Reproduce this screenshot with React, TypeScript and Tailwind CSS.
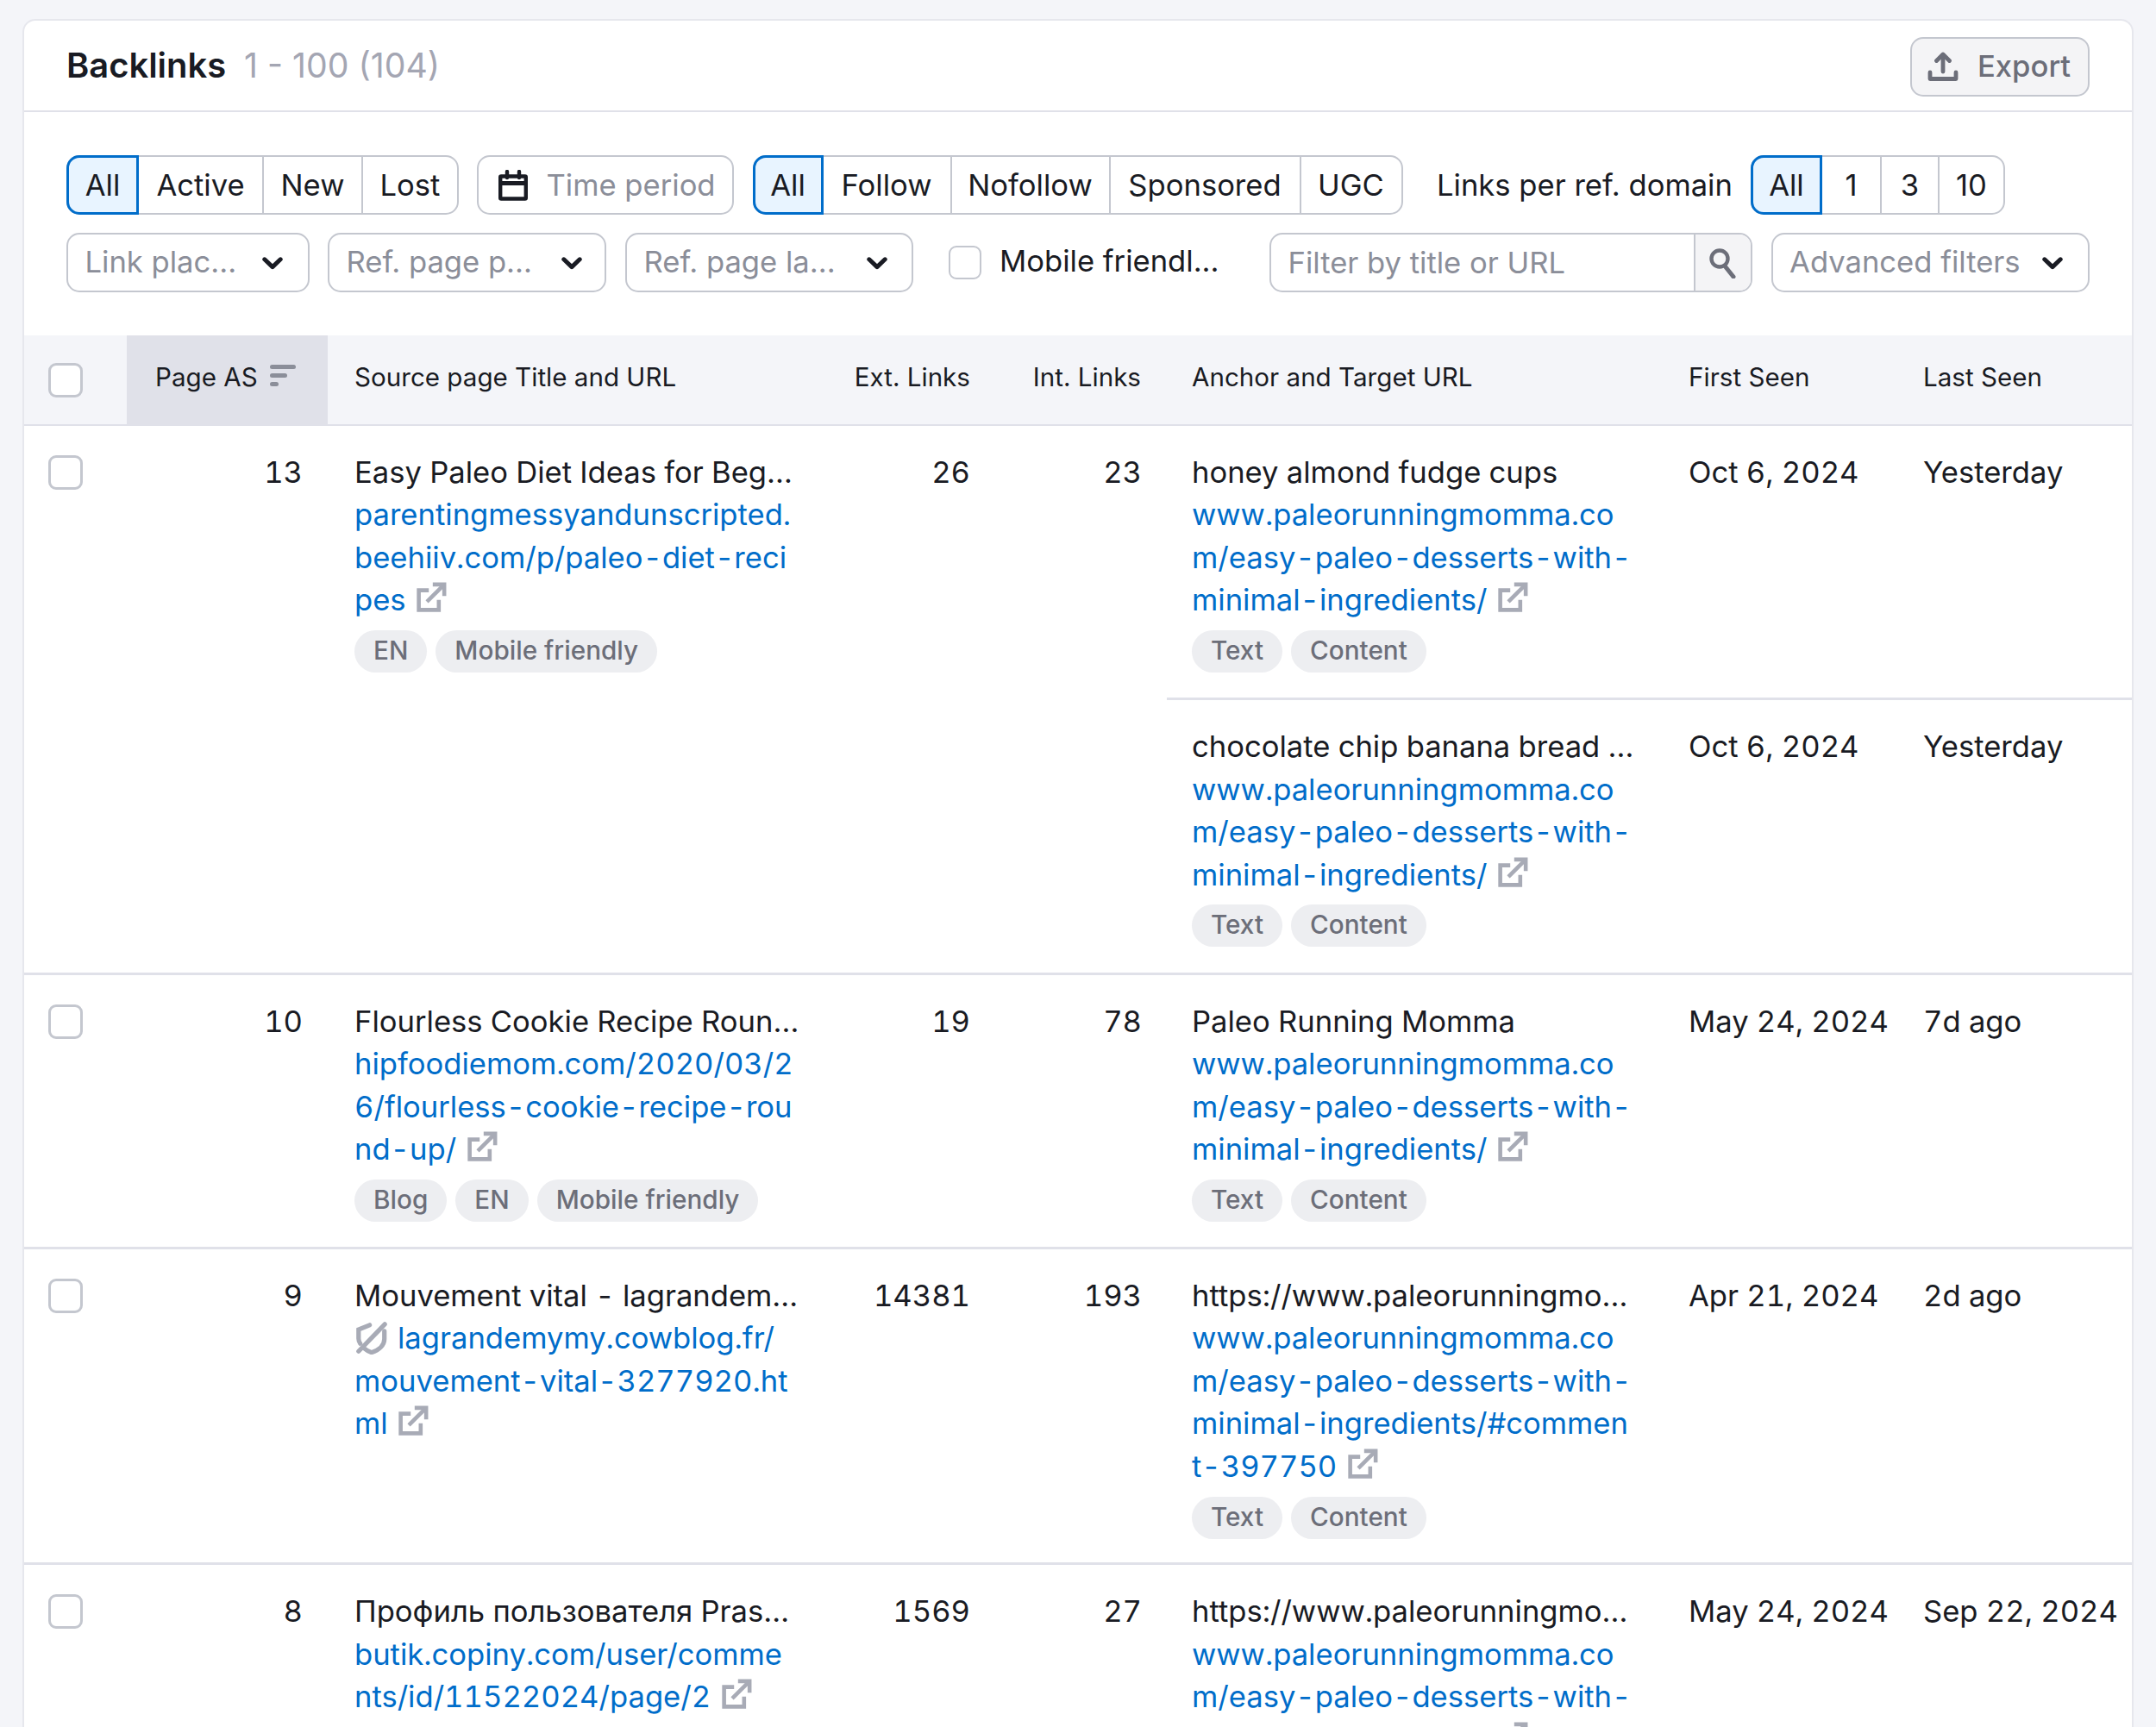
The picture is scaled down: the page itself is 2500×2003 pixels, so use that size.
import React from "react";

const BORDER = "border-[#c4c7cf]";

function ExtIcon() {
  return (
    <svg viewBox="0 0 16 16" className="inline-block w-[35px] h-[35px] ml-[12.5px] align-[-2px]" fill="none" stroke="#a8abb6" strokeWidth="2.1">
      <path d="M6.5 4.4H1.2v10.4h10.6V9.5" />
      <path d="M5.5 10.5 14 2" />
      <path d="M8.6 1.3h6.1v6.1" />
    </svg>
  );
}

function NoFollowIcon() {
  return (
    <svg viewBox="0 0 16 16" className="inline-block w-[38px] h-[38px] ml-[1px] mr-[11px] align-[-7px]" fill="none" stroke="#a8abb6" strokeWidth="2.2" strokeLinecap="round">
      <path d="M7 1.6 1.6 3.8v4.4c0 .9.3 1.7.8 2.4" />
      <path d="M14.2 4.6v3.8c0 3-2.6 5.4-6.3 6.6-1.4-.5-2.5-1.1-3.4-1.9" />
      <path d="M1.6 14.4 14.4 1.2" />
    </svg>
  );
}

function Chevron() {
  return (
    <svg viewBox="0 0 24 15" className="w-[24px] h-[15px] shrink-0 mt-[2px]" fill="none" stroke="#191b23" strokeWidth="5" strokeLinecap="round" strokeLinejoin="round">
      <path d="M2.8 2.8 12 11.6l9.2-8.8" />
    </svg>
  );
}

function CalendarIcon() {
  return (
    <svg viewBox="0 0 34 36" className="w-[34px] h-[36px] shrink-0" fill="none" stroke="#191b23" strokeWidth="4.4" strokeLinecap="round">
      <rect x="2.2" y="7.5" width="29.6" height="26" rx="1" />
      <path d="M2 15.5h30" strokeWidth="5" strokeLinecap="butt" />
      <path d="M10 2v7M24 2v7" />
    </svg>
  );
}

function ExportIcon() {
  return (
    <svg viewBox="0 0 36 34" className="w-[36px] h-[34px] shrink-0" fill="none" stroke="#6c6e79" strokeWidth="4.8" strokeLinecap="round" strokeLinejoin="round">
      <path d="M18 4v19" />
      <path d="M10.5 10.5 18 3l7.5 7.5" />
      <path d="M3 24v7.5h30V24" />
    </svg>
  );
}

function SearchIcon() {
  return (
    <svg viewBox="0 0 34 36" className="w-[34px] h-[36px]" fill="none" stroke="#6c6e79" strokeWidth="4.4" strokeLinecap="round">
      <circle cx="13" cy="13" r="9.5" />
      <path d="M19 21.5 29 34" strokeWidth="5" />
    </svg>
  );
}

function SortIcon() {
  return (
    <svg viewBox="0 0 30 26" className="w-[30px] h-[26px] shrink-0 mt-[10px]" fill="#8b8e99">
      <rect x="0" y="0" width="30" height="5" rx="2.5" />
      <rect x="0" y="10" width="20" height="5" rx="2.5" />
      <rect x="0" y="20" width="10" height="5" rx="2.5" />
    </svg>
  );
}

function Checkbox({ className = "" }: { className?: string }) {
  return <div className={"w-[40px] h-[40px] rounded-[9px] border-[3px] border-[#c4c7cf] bg-white shrink-0 " + className} />;
}

function Url({ lines, nofollow }: { lines: string[]; nofollow?: boolean }) {
  return (
    <div className="text-[#006dca]">
      {lines.map((l, i) => (
        <div key={i} className="whitespace-nowrap h-[49.6px]">
          {i === 0 && nofollow && <NoFollowIcon />}
          {l}
          {i === lines.length - 1 && <ExtIcon />}
        </div>
      ))}
    </div>
  );
}

function Pills({ items }: { items: string[] }) {
  return (
    <div className="flex gap-[10px] mt-[10px]">
      {items.map((t) => (
        <span key={t} className="h-[49px] px-[22px] rounded-full bg-[#edeef1] text-[#6c6e79] text-[29.7px] font-medium leading-[47px] whitespace-nowrap">
          {t}
        </span>
      ))}
    </div>
  );
}

type Seg = { label: string; w: string; active?: boolean };

function Segments({ items }: { items: Seg[] }) {
  return (
    <div className={"flex h-[69px] rounded-[15px] border-2 bg-white " + BORDER}>
      {items.map((s, i) => (
        <div
          key={s.label}
          className={
            s.w +
            " " +
            (s.active
              ? "-my-[2px] -ml-[2px] h-[69px] rounded-l-[15px] border-[3px] border-[#006dca] bg-[#e8f4ff] flex items-center justify-center text-[#191b23]"
              : "flex items-center justify-center text-[#191b23] " + (i > 1 ? "border-l-2 " + BORDER : ""))
          }
        >
          {s.label}
        </div>
      ))}
    </div>
  );
}

function Select({ label, className = "" }: { label: string; className?: string }) {
  return (
    <div className={"h-[69px] flex items-center justify-between pl-[19.5px] rounded-[15px] border-2 text-[#8b8e99] whitespace-nowrap " + BORDER + " " + className}>
      <span className="-mt-[2px]">{label}</span>
      <Chevron />
    </div>
  );
}

const TARGET = ["www.paleorunningmomma.co", "m/easy-paleo-desserts-with-", "minimal-ingredients/"];
const TARGET2 = ["www.paleorunningmomma.co", "m/easy-paleo-desserts-with-", "minimal-ingredients/#commen", "t-397750"];

type Anchor = { text: string; url: string[]; first: string; last: string };
type Row = {
  as: string;
  title: string;
  url: string[];
  nofollow?: boolean;
  tags?: string[];
  ext: string;
  int: string;
  pb: string;
  anchors: Anchor[];
};

const ROWS: Row[] = [
  {
    as: "13",
    title: "Easy Paleo Diet Ideas for Beg…",
    url: ["parentingmessyandunscripted.", "beehiiv.com/p/paleo-diet-reci", "pes"],
    tags: ["EN", "Mobile friendly"],
    ext: "26",
    int: "23",
    pb: "pb-[29.2px]",
    anchors: [
      { text: "honey almond fudge cups", url: TARGET, first: "Oct 6, 2024", last: "Yesterday" },
      { text: "chocolate chip banana bread …", url: TARGET, first: "Oct 6, 2024", last: "Yesterday" },
    ],
  },
  {
    as: "10",
    title: "Flourless Cookie Recipe Roun…",
    url: ["hipfoodiemom.com/2020/03/2", "6/flourless-cookie-recipe-rou", "nd-up/"],
    tags: ["Blog", "EN", "Mobile friendly"],
    ext: "19",
    int: "78",
    pb: "pb-[28.6px]",
    anchors: [{ text: "Paleo Running Momma", url: TARGET, first: "May 24, 2024", last: "7d ago" }],
  },
  {
    as: "9",
    title: "Mouvement vital - lagrandem…",
    url: ["lagrandemymy.cowblog.fr/", "mouvement-vital-3277920.ht", "ml"],
    nofollow: true,
    ext: "14381",
    int: "193",
    pb: "pb-[27.6px]",
    anchors: [{ text: "https://www.paleorunningmo…", url: TARGET2, first: "Apr 21, 2024", last: "2d ago" }],
  },
  {
    as: "8",
    title: "Профиль пользователя Pras…",
    url: ["butik.copiny.com/user/comme", "nts/id/11522024/page/2"],
    ext: "1569",
    int: "27",
    pb: "pb-[28.6px]",
    anchors: [{ text: "https://www.paleorunningmo…", url: TARGET, first: "May 24, 2024", last: "Sep 22, 2024" }],
  },
];

export default function App() {
  return (
    <div className="h-[2003px] overflow-hidden bg-[#f4f5f9] pt-[22px] px-[26px] text-[34.6px] leading-[49.6px] text-[#191b23] [font-family:Inter,sans-serif]">
      <div className="w-[2448px] bg-white rounded-t-[15px] border-x-2 border-t-2 border-[#e6e7ed]">
        {/* Title bar */}
        <div className="h-[106px] flex items-center justify-between pl-[49px] pr-[49px] border-b-2 border-[#e0e1e9]">
          <div className="flex items-baseline gap-[21px]">
            <span className="font-semibold text-[39.9px]">Backlinks</span>
            <span className="text-[#a4a6b3] text-[39.2px]">1 - 100 (104)</span>
          </div>
          <div className="w-[208px] h-[69px] mt-[2px] rounded-[15px] border-2 border-[#c4c7cf] bg-[#f4f4f6] flex items-center pl-[18px] gap-[22px] text-[#6c6e79] font-medium">
            <ExportIcon />
            <span>Export</span>
          </div>
        </div>

        {/* Filters */}
        <div className="pt-[50px] pb-[49.5px] pl-[49px] flex flex-col gap-[21px]">
          <div className="flex items-center">
            <Segments
              items={[
                { label: "All", w: "w-[84px]", active: true },
                { label: "Active", w: "w-[143px]" },
                { label: "New", w: "w-[115px]" },
                { label: "Lost", w: "w-[111px]" },
              ]}
            />
            <div className={"ml-[20.5px] w-[298px] h-[69px] rounded-[15px] border-2 flex items-center pl-[23px] gap-[22px] text-[#8b8e99] " + BORDER}>
              <CalendarIcon />
              <span>Time period</span>
            </div>
            <div className="ml-[22px]">
              <Segments
                items={[
                  { label: "All", w: "w-[82px]", active: true },
                  { label: "Follow", w: "w-[147px]" },
                  { label: "Nofollow", w: "w-[184px]" },
                  { label: "Sponsored", w: "w-[221px]" },
                  { label: "UGC", w: "w-[118px]" },
                ]}
              />
            </div>
            <span className="ml-[39.5px] whitespace-nowrap">Links per ref. domain</span>
            <div className="ml-[21px]">
              <Segments
                items={[
                  { label: "All", w: "w-[83px]", active: true },
                  { label: "1", w: "w-[67px]" },
                  { label: "3", w: "w-[67px]" },
                  { label: "10", w: "w-[76px]" },
                ]}
              />
            </div>
          </div>
          <div className="flex items-center">
            <Select label="Link plac..." className="w-[282px] pr-[29px]" />
            <Select label="Ref. page p..." className="ml-[21px] w-[323px] pr-[26px]" />
            <Select label="Ref. page la..." className="ml-[22px] w-[334px] pr-[28px]" />
            <Checkbox className="ml-[41px] !w-[38px] !h-[39px] rounded-[8px] !border-2" />
            <span className="ml-[21px] -mt-[3px] whitespace-nowrap">Mobile friendl...</span>
            <div className={"ml-[58px] w-[560px] h-[69px] rounded-[15px] border-2 flex overflow-hidden " + BORDER}>
              <div className="flex-1 flex items-center pl-[20px] text-[#8b8e99]">Filter by title or URL</div>
              <div className={"w-[66px] bg-[#f4f4f6] border-l-2 flex items-center justify-center " + BORDER}>
                <SearchIcon />
              </div>
            </div>
            <Select label="Advanced filters" className="ml-[22px] w-[369px] pr-[29px]" />
          </div>
        </div>

        {/* Table header */}
        <div className="h-[105px] bg-[#f4f5f9] border-b-2 border-[#e0e1e9] flex text-[29.6px] items-stretch">
          <div className="w-[119px] flex items-center pl-[28px]">
            <Checkbox className="mt-[2px]" />
          </div>
          <div className="w-[233px] bg-[#e0e1e9] flex items-start pt-[24px] pl-[33px] gap-[14px]">
            <span>Page AS</span>
            <SortIcon />
          </div>
          <div className="w-[570px] pl-[31px] pt-[24px]">Source page Title and URL</div>
          <div className="w-[205px] pr-[30px] pt-[24px] text-right">Ext. Links</div>
          <div className="w-[198px] pr-[30px] pt-[24px] text-right">Int. Links</div>
          <div className="w-[575px] pl-[29px] pt-[24px]">Anchor and Target URL</div>
          <div className="w-[272px] pl-[30px] pt-[24px]">First Seen</div>
          <div className="flex-1 pl-[30px] pt-[24px]">Last Seen</div>
        </div>

        {/* Rows */}
        {ROWS.map((r) => (
          <div key={r.as} className="flex border-b-[3px] border-[#e0e1e9] tabular-nums">
            <div className="w-[119px] pl-[28px] pt-[34px]">
              <Checkbox />
            </div>
            <div className="w-[233px] pr-[29px] pt-[29px] text-right">{r.as}</div>
            <div className="w-[570px] pl-[31px] pt-[29px]">
              <div className="whitespace-nowrap">{r.title}</div>
              <Url lines={r.url} nofollow={r.nofollow} />
              {r.tags && <Pills items={r.tags} />}
            </div>
            <div className="w-[205px] pr-[30px] pt-[29px] text-right">{r.ext}</div>
            <div className="w-[198px] pr-[29px] pt-[29px] text-right">{r.int}</div>
            <div className="flex-1">
              {r.anchors.map((a, i) => (
                <div key={i} className={"flex pt-[29px] " + r.pb + (i > 0 ? " border-t-[3px] border-[#e0e1e9]" : "")}>
                  <div className="w-[575px] pl-[29px]">
                    <div className="whitespace-nowrap">{a.text}</div>
                    <Url lines={a.url} />
                    <Pills items={["Text", "Content"]} />
                  </div>
                  <div className="w-[272px] pl-[30px] whitespace-nowrap">{a.first}</div>
                  <div className="flex-1 pl-[30px] whitespace-nowrap">{a.last}</div>
                </div>
              ))}
            </div>
          </div>
        ))}
      </div>
    </div>
  );
}
